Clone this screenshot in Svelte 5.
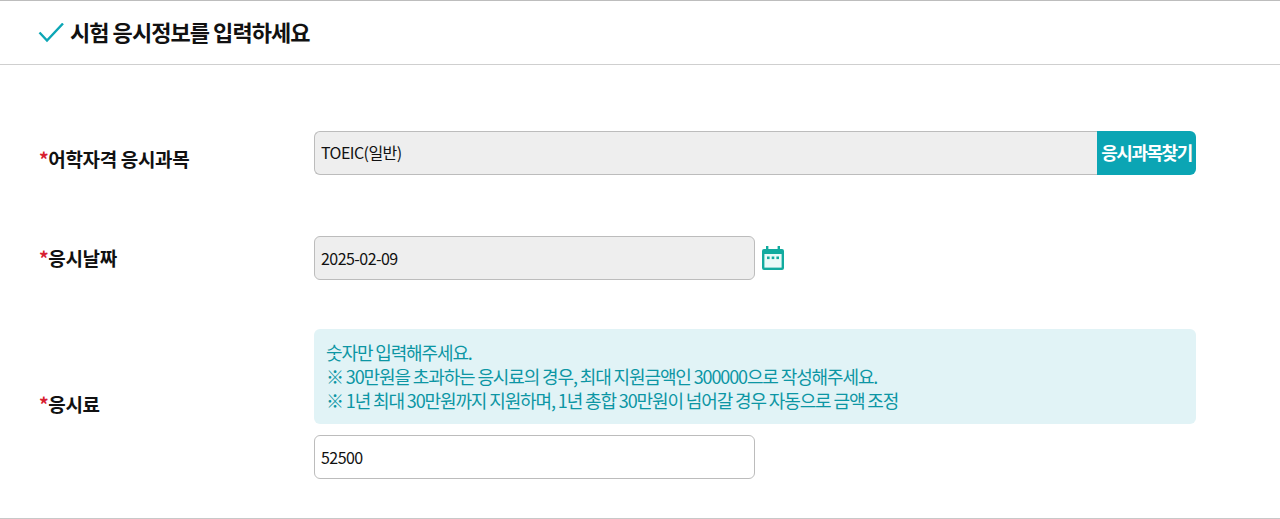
<script>
  let subject = 'TOEIC(일반)';
  let examDate = '2025-02-09';
  let fee = '52500';
</script>

<main>
  <h2 class="title">
    <svg class="check" width="26" height="20" viewBox="0 0 26 20" aria-hidden="true">
      <path d="M1.5 9.5 L9 17.5 L25 0.5" fill="none" stroke="#0ca6b5" stroke-width="2.4" />
    </svg>
    <span class="title-text">시험 응시정보를 입력하세요</span>
  </h2>

  <div class="form">
    <div class="row first">
      <div class="label"><span class="star">*</span>어학자격 응시과목</div>
      <div class="field">
        <div class="search">
          <input class="grey" type="text" readonly value={subject} />
          <button type="button">응시과목찾기</button>
        </div>
      </div>
    </div>

    <div class="row second">
      <div class="label"><span class="star">*</span>응시날짜</div>
      <div class="field date">
        <input class="grey short" type="text" readonly value={examDate} />
        <svg class="cal" width="24" height="26" viewBox="0 0 24 26" aria-hidden="true">
          <path d="M5 1h2.4v3h9.2V1H19v3h2a2 2 0 0 1 2 2v17a2 2 0 0 1-2 2H3a2 2 0 0 1-2-2V6a2 2 0 0 1 2-2h2z" fill="#12ab9f" />
          <rect x="3.4" y="9" width="17.2" height="13.6" fill="#eafaf8" />
          <rect x="6" y="11.5" width="2.6" height="2.6" fill="#12ab9f" />
          <rect x="10.7" y="11.5" width="2.6" height="2.6" fill="#12ab9f" />
          <rect x="15.4" y="11.5" width="2.6" height="2.6" fill="#12ab9f" />
        </svg>
      </div>
    </div>

    <div class="row third">
      <div class="label"><span class="star">*</span>응시료</div>
      <div class="field">
        <div class="notice">
          숫자만 입력해주세요.<br />
          ※ 30만원을 초과하는 응시료의 경우, 최대 지원금액인 300000으로 작성해주세요.<br />
          ※ 1년 최대 30만원까지 지원하며, 1년 총합 30만원이 넘어갈 경우 자동으로 금액 조정
        </div>
        <input class="short fee" type="text" value={fee} />
      </div>
    </div>
  </div>
</main>

<style>
  :global(body) {
    background: #fff;
  }

  main {
    height: 519px;
    box-sizing: border-box;
    border-top: 1px solid #bdbdbd;
    border-bottom: 1px solid #c8c8c8;
    font-family: "Noto Sans CJK KR", "Noto Sans", sans-serif;
    color: #111;
    overflow: hidden;
  }

  .title {
    display: flex;
    align-items: center;
    gap: 6px;
    height: 63px;
    margin: 0;
    padding-left: 38px;
    border-bottom: 1px solid #cfcfcf;
    font-size: 22px;
    font-weight: 700;
    letter-spacing: -0.95px;
  }

  .title-text {
    padding-bottom: 3px;
  }

  .form {
    padding: 66px 84px 0 39px;
  }

  .row {
    display: flex;
    align-items: center;
  }

  .second {
    margin-top: 61px;
  }

  .third {
    margin-top: 49px;
  }

  .label {
    flex: 0 0 275px;
    font-size: 19px;
    font-weight: 700;
    letter-spacing: -0.35px;
  }

  .first .label {
    padding-top: 10px;
  }

  .second .label {
    padding-bottom: 2px;
  }

  .third .label {
    padding-bottom: 2px;
  }

  .star {
    color: #d8202f;
  }

  .field {
    flex: 1;
    min-width: 0;
  }

  .date {
    display: flex;
    align-items: center;
    gap: 6px;
  }

  .search {
    display: flex;
    height: 44px;
  }

  input {
    display: block;
    box-sizing: border-box;
    height: 44px;
    padding: 0 6px 2px;
    border: 1px solid #bcbcbc;
    border-radius: 6px;
    background: #fff;
    color: #111;
    font-family: inherit;
    font-size: 16px;
    letter-spacing: -0.55px;
    outline: none;
  }

  .grey {
    background: #eee;
  }

  .date input,
  .fee {
    padding-bottom: 0;
  }

  .search input {
    flex: 1;
    min-width: 0;
    border-right: 0;
    border-radius: 6px 0 0 6px;
  }

  .short {
    width: 441px;
  }

  button {
    flex: 0 0 99px;
    padding: 0 0 2px;
    border: 0;
    border-radius: 0 6px 6px 0;
    background: #0ba5b4;
    color: #fff;
    font-family: inherit;
    font-size: 18px;
    font-weight: 700;
    letter-spacing: -1.45px;
    white-space: nowrap;
  }

  .notice {
    box-sizing: border-box;
    height: 95px;
    margin-bottom: 11px;
    padding: 11px 12px 0;
    border-radius: 6px;
    background: #e1f3f6;
    color: #0c96a4;
    font-size: 18px;
    line-height: 24px;
    letter-spacing: -1.12px;
  }
</style>
